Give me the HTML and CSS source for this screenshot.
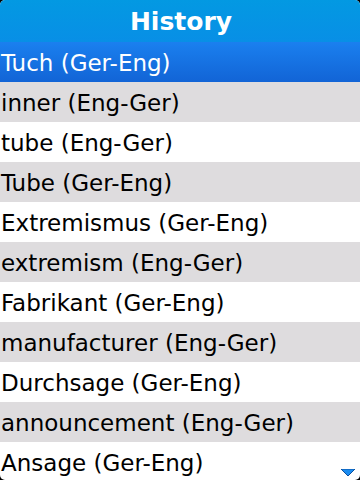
FILE: index.html
```html
<!DOCTYPE html>
<html lang="en">
<head>
  <meta charset="UTF-8">
  <meta name="viewport" content="width=device-width, initial-scale=1.0">
  <title>History</title>
  <link rel="stylesheet" href="styles.css">
</head>
<body>
  <div class="screen">
    <div class="title-bar">History</div>
    <ul class="history-list">
      <li class="entry selected">Tuch (Ger-Eng)</li>
      <li class="entry">inner (Eng-Ger)</li>
      <li class="entry">tube (Eng-Ger)</li>
      <li class="entry">Tube (Ger-Eng)</li>
      <li class="entry">Extremismus (Ger-Eng)</li>
      <li class="entry">extremism (Eng-Ger)</li>
      <li class="entry">Fabrikant (Ger-Eng)</li>
      <li class="entry">manufacturer (Eng-Ger)</li>
      <li class="entry">Durchsage (Ger-Eng)</li>
      <li class="entry">announcement (Eng-Ger)</li>
      <li class="entry">Ansage (Ger-Eng)</li>
    </ul>
    <!-- more-items indicator -->
    <svg class="more-arrow" width="14" height="8" viewBox="0 0 14 8">
      <polygon points="0,0 14,0 7,7" fill="#1a8cf0" stroke="#0a4fa0" stroke-width="1"/>
    </svg>
  </div>
</body>
</html>
```

FILE: styles.css
```css
html, body {
  margin: 0;
  padding: 0;
  background: #000;
}

.screen {
  position: relative;
  width: 360px;
  height: 480px;
  overflow: hidden;
  border-radius: 5px;
  background: #fff;
  font-family: "DejaVu Sans", sans-serif;
}

.title-bar {
  height: 42px;
  line-height: 43px;
  text-align: center;
  padding-left: 2px;
  color: #fff;
  font-size: 25px;
  font-weight: bold;
  background: linear-gradient(#0399e2, #088fe6);
}

.history-list {
  list-style: none;
  margin: 0;
  padding: 0;
}

.entry {
  height: 40px;
  line-height: 42px;
  padding-left: 1px;
  font-size: 23px;
  color: #000;
  white-space: nowrap;
  overflow: hidden;
}

.entry:nth-child(even) {
  background: #dedcde;
}

.entry.selected {
  color: #fff;
  background: linear-gradient(#1a80ef, #1264d6);
}

.more-arrow {
  position: absolute;
  right: 5px;
  bottom: 3px;
}
```
